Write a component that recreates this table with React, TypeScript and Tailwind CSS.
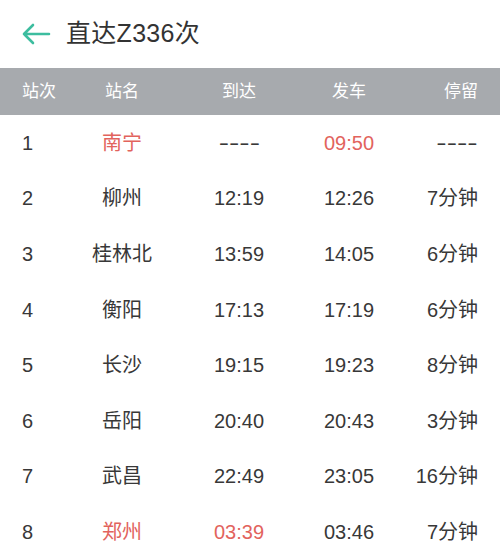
import React from 'react';

type Stop = { no: number; name: string; arrive: string; depart: string; stay: string; hl?: 'start' | 'end' };

const stops: Stop[] = [
  { no: 1, name: '南宁', arrive: '----', depart: '09:50', stay: '----', hl: 'start' },
  { no: 2, name: '柳州', arrive: '12:19', depart: '12:26', stay: '7分钟' },
  { no: 3, name: '桂林北', arrive: '13:59', depart: '14:05', stay: '6分钟' },
  { no: 4, name: '衡阳', arrive: '17:13', depart: '17:19', stay: '6分钟' },
  { no: 5, name: '长沙', arrive: '19:15', depart: '19:23', stay: '8分钟' },
  { no: 6, name: '岳阳', arrive: '20:40', depart: '20:43', stay: '3分钟' },
  { no: 7, name: '武昌', arrive: '22:49', depart: '23:05', stay: '16分钟' },
  { no: 8, name: '郑州', arrive: '03:39', depart: '03:46', stay: '7分钟', hl: 'end' },
];

const cols = 'grid grid-cols-[80px_84px_150px_70px_1fr] items-center pr-[22px]';

// dashes in the reference are drawn wider than a plain hyphen
const Cell = ({ v, right }: { v: string; right?: boolean }) =>
  v === '----' ? (
    <span className={`inline-block scale-x-[1.55] ${right ? 'origin-right' : 'origin-center'}`}>{v}</span>
  ) : (
    <>{v}</>
  );

export default function App() {
  return (
    <div className="w-[500px] h-[558px] overflow-hidden bg-white font-['Liberation_Sans','Noto_Sans_CJK_SC',sans-serif]">
      <div className="h-[68px] flex items-center pl-[21px] gap-[15px]">
        <svg width="30" height="22" viewBox="0 0 30 22" fill="none">
          <path d="M28 11H3M12 2L3 11L12 20" stroke="#3dbd9f" strokeWidth="2.6" strokeLinecap="round" strokeLinejoin="round" />
        </svg>
        <span className="text-[25px] text-[#333] tracking-[0.3px] -mt-[1px]">直达Z336次</span>
      </div>
      <div className={`${cols} h-[47px] bg-[#a7aaae] text-white text-[17px]`}>
        <span className="pl-[22px]">站次</span>
        <span className="text-center">站名</span>
        <span className="text-center">到达</span>
        <span className="text-center">发车</span>
        <span className="text-right">停留</span>
      </div>
      {stops.map((s) => (
        <div key={s.no} className={`${cols} h-[55.6px] text-[20px] text-[#383838]`}>
          <span className="pl-[22px]">{s.no}</span>
          <span className={`text-center ${s.hl ? 'text-[#e2635d]' : ''}`}>{s.name}</span>
          <span className={`text-center ${s.hl === 'end' ? 'text-[#e2635d]' : ''}`}><Cell v={s.arrive} /></span>
          <span className={`text-center ${s.hl === 'start' ? 'text-[#e2635d]' : ''}`}><Cell v={s.depart} /></span>
          <span className="text-right"><Cell v={s.stay} right /></span>
        </div>
      ))}
    </div>
  );
}
